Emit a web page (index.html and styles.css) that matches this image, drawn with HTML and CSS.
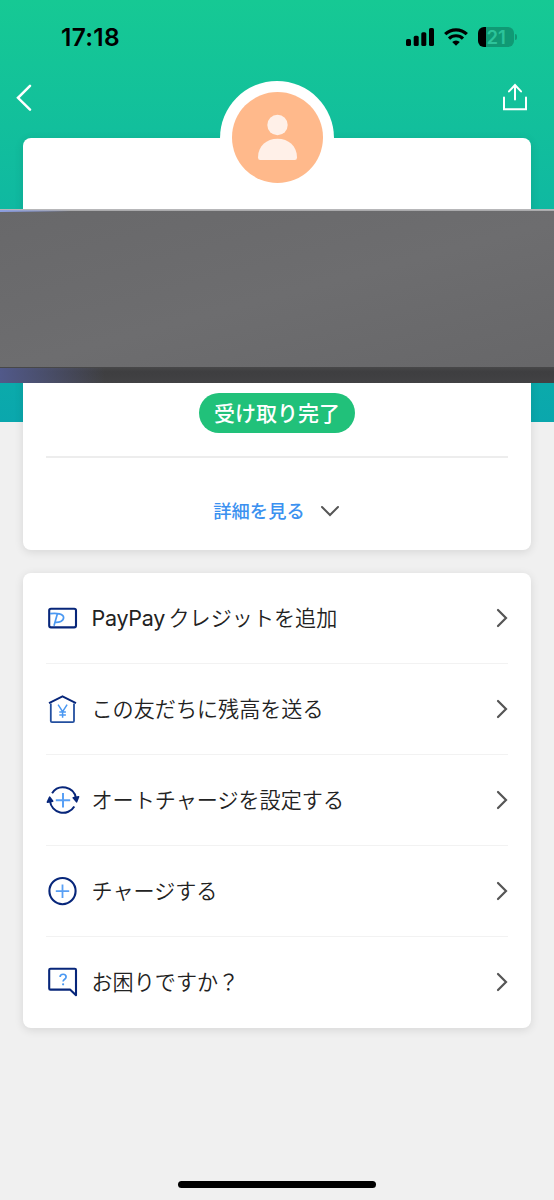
FILE: index.html
```html
<!DOCTYPE html>
<html lang="ja">
<head>
<meta charset="utf-8">
<title>受け取り完了</title>
<link rel="stylesheet" href="styles.css">
</head>
<body>
<div class="screen">
  <header class="status">
    <span class="clock">17:18</span>
    <span class="indicators">
      <svg class="signal" width="28" height="18" viewBox="0 0 28 18"><rect x="0" y="11" width="5" height="7" rx="1.6"/><rect x="7.7" y="7.8" width="5" height="10.2" rx="1.6"/><rect x="15.3" y="4.2" width="5" height="13.8" rx="1.6"/><rect x="23" y="0" width="5" height="18" rx="1.6"/></svg>
      <svg class="wifi" width="24" height="18" viewBox="0 0 24 18"><g fill="none" stroke="#000" stroke-width="3.2"><path d="M1.2 6.2a15.4 15.4 0 0 1 21.6 0"/><path d="M5 10.6a10 10 0 0 1 14 0"/></g><path d="M8.2 14a5.5 5.5 0 0 1 7.6 0L12 17.8z"/></svg>
      <span class="battery">21</span>
    </span>
  </header>
  <nav class="nav">
    <svg width="18" height="28" viewBox="0 0 18 28"><path d="M15 2.8L3 14.8 15 26.6" fill="none" stroke="#fff" stroke-width="2.5" stroke-linecap="round"/></svg>
    <svg width="26" height="28" viewBox="0 0 26 28"><path d="M2 14.5V26.2H24V14.5M13 16.5V2M7 8.4l6-6.4 6 6.4" fill="none" stroke="#fff" stroke-width="2" stroke-linecap="round"/></svg>
  </nav>
  <main class="content">
    <section class="card summary">
      <div class="avatar">
        <svg width="91" height="91" viewBox="0 0 91 91"><circle cx="45.5" cy="45.5" r="45.5" fill="#ffb98b"/><circle cx="45.5" cy="33" r="10.2" fill="#fff0e8"/><path d="M26 65.5C26 54 34.5 46.8 45.5 46.8S65 54 65 65.5Q65 68 62.8 68H28.2Q26 68 26 65.5Z" fill="#fff0e8"/></svg>
      </div>
      <div class="redaction"></div>
      <div class="badge">受け取り完了</div>
      <div class="details"><span>詳細を見る</span><svg width="20" height="13" viewBox="0 0 20 13"><path d="M2 3l8 8 8-8" fill="none" stroke="#555" stroke-width="2" stroke-linecap="round"/></svg></div>
    </section>
    <section class="card menu">
      <div class="row">
        <svg class="icon" viewBox="0 0 34 34"><rect x="3.2" y="7.8" width="26.8" height="18.6" rx="1.8" stroke="#07267a"/><path d="M4 12.6C11 11.8 17.6 12.6 17.6 16.6c0 3.6-4.4 5.2-9.2 4.7M11.4 12.8L8 24.8" stroke="#4a98f2" stroke-width="1.7"/></svg>
        <span class="label"><span class="brand">PayPay</span>クレジットを追加</span>
        <svg class="chevron" viewBox="0 0 12 20"><path d="M2 2l8 8-8 8"/></svg>
      </div>
      <div class="row">
        <svg class="icon" viewBox="0 0 34 34"><path d="M4.8 11.5V29q0 1.2 1.2 1.2H26.8Q28 30.2 28 29V11.5" stroke="#234f9f" stroke-width="1.8"/><path d="M3 11.1L16.5 4.3l13.5 6.8" stroke="#07267a" stroke-width="1.9"/><path d="M12.1 12.6l4.5 7 4.5-7M16.6 19.6v6.2M13.3 20h6.6M13.3 23h6.6" stroke="#4a98f2" stroke-width="1.5"/></svg>
        <span class="label">この友だちに残高を送る</span>
        <svg class="chevron" viewBox="0 0 12 20"><path d="M2 2l8 8-8 8"/></svg>
      </div>
      <div class="row">
        <svg class="icon" viewBox="0 0 34 34"><path d="M6.1 10.2A13.1 13.1 0 0 1 29.9 15M28.3 23.4A13.1 13.1 0 0 1 4 18" stroke="#07267a" stroke-width="2"/><path d="M27.2 14.8l5.4-1-2 5zM1.4 19.2l2.3-5 3 4z" fill="#07267a" stroke="#07267a" stroke-width="1.6"/><path d="M17 10v14.4M9.8 17.2h14.4" stroke="#59a0f5" stroke-width="2"/></svg>
        <span class="label">オートチャージを設定する</span>
        <svg class="chevron" viewBox="0 0 12 20"><path d="M2 2l8 8-8 8"/></svg>
      </div>
      <div class="row">
        <svg class="icon" viewBox="0 0 34 34"><circle cx="16.5" cy="17.1" r="13.1" stroke="#07267a" stroke-width="2.1"/><path d="M16.5 10.5v13.4M9.8 17.2h13.4" stroke="#59a0f5" stroke-width="1.8"/></svg>
        <span class="label">チャージする</span>
        <svg class="chevron" viewBox="0 0 12 20"><path d="M2 2l8 8-8 8"/></svg>
      </div>
      <div class="row">
        <svg class="icon" viewBox="0 0 34 34"><path d="M4.5 3.8H28.8q1.2 0 1.2 1.2V30.2l-6-5.6H4.5q-1.3 0-1.3-1.2V5q0-1.2 1.3-1.2z" stroke="#07267a"/><path d="M14.1 12c0-3.7 6-3.7 6 0 0 2.3-3 2.1-3 4.6" stroke="#4a98f2" stroke-width="1.7"/><circle cx="17.1" cy="19.3" r="1.1" fill="#4a98f2"/></svg>
        <span class="label">お困りですか？</span>
        <svg class="chevron" viewBox="0 0 12 20"><path d="M2 2l8 8-8 8"/></svg>
      </div>
    </section>
  </main>
  <div class="home-indicator"></div>
</div>
</body>
</html>
```
FILE: styles.css
```css
* { box-sizing: border-box; }
body { margin: 0; background: #f0f0f0; font-family: "Noto Sans CJK JP", sans-serif; color: #222; }
svg { display: block; flex: none; }
.screen {
  height: 1200px;
  display: flex;
  flex-direction: column;
  overflow: hidden;
  background: linear-gradient(#16c994, #10baa0 45%, #0aa7ad) top / 100% 422px no-repeat #f0f0f0;
}
.status { height: 74px; padding: 0 38px 0 61px; display: flex; align-items: center; justify-content: space-between; }
.clock { font: 600 24.5px/30px Inter, sans-serif; color: #000; letter-spacing: 0.3px; }
.indicators { display: flex; align-items: center; gap: 10px; margin-right: 1px; }
.battery {
  position: relative;
  width: 36px;
  height: 20px;
  margin-right: 1px;
  border-radius: 6px;
  background: linear-gradient(90deg, #000 8px, #109974 8px);
  font: 600 18.5px/20px Inter, sans-serif;
  color: #2cc49a;
  padding-left: 8.5px;
}
.battery::after { content: ""; position: absolute; right: -3px; top: 7px; width: 2px; height: 6px; border-radius: 0 2px 2px 0; background: #109974; }
.nav { height: 64px; padding: 9px 26px 0 15px; display: flex; justify-content: space-between; }
.content { display: flex; flex-direction: column; gap: 23px; padding: 0 23px; }
.card { background: #fff; border-radius: 8px; box-shadow: 0 2px 10px rgba(0, 0, 0, .11); }
.summary { height: 411.5px; display: flex; flex-direction: column; align-items: center; }
.avatar { flex: none; width: 114px; height: 114px; margin-top: -57px; padding: 11px 11.5px; border-radius: 50%; background: #fff; }
.redaction {
  position: relative;
  flex: none;
  width: 554px;
  height: 174px;
  margin-top: 14px;
  background:
    linear-gradient(90deg, #8c9de0, rgba(150, 160, 200, 0) 70px) 0 1px / 100% 2px no-repeat,
    linear-gradient(#bdbdbf, #a5a5a7) 0 0 / 100% 2px no-repeat,
    linear-gradient(90deg, #51598a, rgba(67, 67, 69, 0) 105px) 0 159px / 100% 15px no-repeat,
    linear-gradient(#484849, #3e3e40 30%, #424244) 0 158px / 100% 16px no-repeat,
    linear-gradient(165deg, #68686a, #6d6d6f 50%, #666668);
}
.badge {
  flex: none;
  width: 156px;
  height: 40px;
  margin-top: 10px;
  border-radius: 20px;
  background: #21c17a;
  color: #fff;
  font-size: 21px;
  font-weight: 500;
  line-height: 39px;
  text-align: center;
}
.details {
  width: 462px;
  height: 93px;
  margin-top: 23px;
  padding: 13px 1px 0 0;
  border-top: 2px solid #ededed;
  display: flex;
  align-items: center;
  justify-content: center;
  gap: 15px;
  font-size: 18.3px;
  font-weight: 500;
  color: #3b91f0;
}
.menu { padding: 0 23px; }
.row { height: 91px; display: flex; align-items: center; border-bottom: 1.5px solid #f2f2f2; }
.row:last-child { border-bottom: 0; }
.icon { width: 34px; height: 34px; fill: none; stroke-width: 2.1; stroke-linejoin: round; }
.label { flex: 1; margin: -2px 0 0 11.5px; font-size: 21.1px; line-height: 30px; white-space: nowrap; font-weight: 350; }
.brand { display: inline-block; width: 77px; font-family: Inter, sans-serif; font-size: 21.5px; font-weight: 400; letter-spacing: -0.3px; }
.row:first-child .label { margin-top: -1px; }
.chevron { width: 12px; height: 20px; fill: none; stroke: #555; stroke-width: 2.2; stroke-linecap: round; }
.home-indicator { flex: none; width: 198px; height: 7px; margin: auto auto 12px; border-radius: 4px; background: #000; }
```
